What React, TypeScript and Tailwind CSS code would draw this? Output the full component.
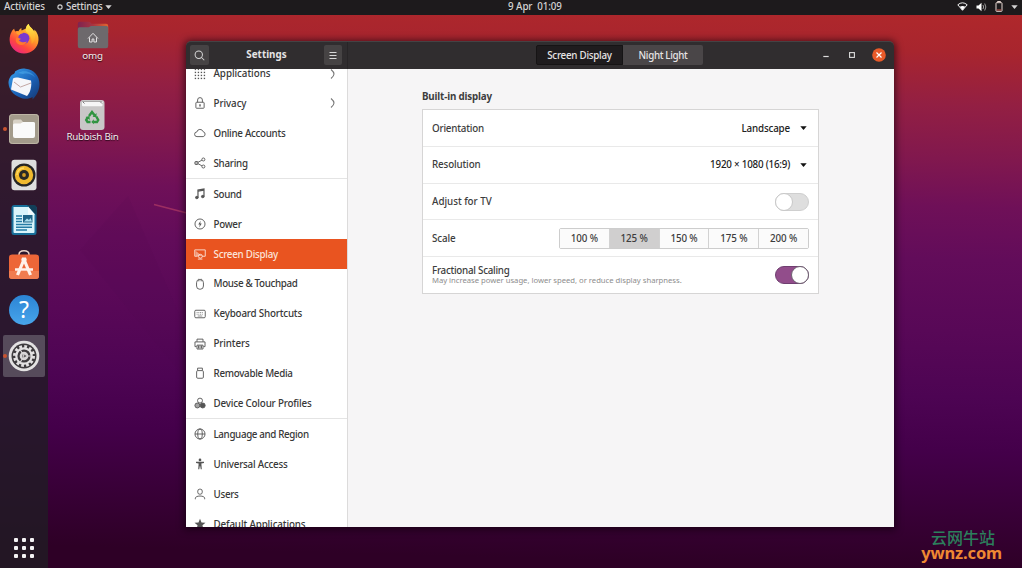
import type { ReactNode } from "react";

type Row = { label: string; track: string; icon: ReactNode; arrow?: boolean; active?: boolean; divider?: boolean };

function Glyph({ children, className = "" }: { children: ReactNode; className?: string }) {
  return (
    <svg viewBox="0 0 16 16" className={`h-[12px] w-[12px] shrink-0 ${className}`} fill="none" stroke="currentColor" strokeWidth="1.2">
      {children}
    </svg>
  );
}

function AppsGlyph() {
  return (
    <Glyph>
      <g fill="currentColor" stroke="none">
        {[2, 6, 10, 14].map((y) => [2, 6, 10, 14].map((x) => <rect key={`${x}-${y}`} x={x - 1} y={y - 1} width="1.8" height="1.8" />))}
      </g>
    </Glyph>
  );
}

const rows: Row[] = [
  { label: "Applications", track: "tracking-[-0.05px]", arrow: true, icon: <AppsGlyph /> },
  {
    label: "Privacy", track: "tracking-[-0.08px]", arrow: true,
    icon: <Glyph><rect x="2.5" y="7" width="11" height="8" rx="1" /><path d="M4.8 7V4a3.2 3.2 0 0 1 6.4 0v3" /><path d="M8 9.5v3" strokeWidth="1.8" /></Glyph>,
  },
  {
    label: "Online Accounts", track: "tracking-[-0.29px]",
    icon: <Glyph><path d="M4 12.8a3.1 3.1 0 0 1-.2-6.2 4.3 4.3 0 0 1 8.3-.4 3.4 3.4 0 0 1 .2 6.6z" /></Glyph>,
  },
  {
    label: "Sharing", track: "tracking-[-0.28px]",
    icon: <Glyph><rect x="1.2" y="6" width="4" height="4" rx="1" fill="currentColor" fillOpacity=".4" /><circle cx="12.5" cy="3.3" r="2" /><circle cx="12.5" cy="12.7" r="2" /><path d="M5.2 7.2l5.4-3M5.2 8.8l5.4 3" /></Glyph>,
  },
  {
    label: "Sound", track: "tracking-[-0.33px]", divider: true,
    icon: <Glyph><path d="M5.3 12.5V2.8l8-1.4v9.8" strokeWidth="1.6" /><path d="M5.3 4.2l8-1.4" strokeWidth="1.8" /><g fill="currentColor"><ellipse cx="3.8" cy="12.7" rx="1.8" ry="1.6" /><ellipse cx="11.7" cy="11.4" rx="1.8" ry="1.6" /></g></Glyph>,
  },
  {
    label: "Power", track: "tracking-[-0.29px]",
    icon: <Glyph><circle cx="8" cy="8" r="6.7" /><path d="M8.8 3.5L5.7 8.6h2L7 12.6l3.3-5.2H8.3z" fill="currentColor" stroke="none" /></Glyph>,
  },
  {
    label: "Screen Display", track: "tracking-[-0.26px]", active: true,
    icon: <Glyph><path d="M1 2.5h14v8.5H11M5 11H1V2.5" /><path d="M2 3.5l9 7H2z" fill="currentColor" fillOpacity=".55" stroke="none" /><circle cx="8.5" cy="11" r="2.6" /><path d="M5.2 14.8h6" /></Glyph>,
  },
  {
    label: "Mouse & Touchpad", track: "tracking-[-0.34px]",
    icon: <Glyph><rect x="3.4" y="2" width="9.2" height="13" rx="4.3" /><path d="M6.5 1v3.5M9.5 1v3.5" strokeWidth="1" /></Glyph>,
  },
  {
    label: "Keyboard Shortcuts", track: "tracking-[-0.19px]",
    icon: <Glyph><rect x="1" y="3" width="14" height="10" rx="1.5" /><path d="M3.5 6h9M3.5 8.3h9" strokeDasharray="1.3 1" strokeOpacity=".7" /><path d="M5 10.7h6" strokeOpacity=".7" /></Glyph>,
  },
  {
    label: "Printers", track: "tracking-[-0.15px]",
    icon: <Glyph><path d="M4 5V1.5h8V5M3.5 11.5H1.3V5.2h13.4v6.3h-2.2" /><path d="M4 9.5h8v5.2H4zM6 10v4M8 10v4M10 10v4" /></Glyph>,
  },
  {
    label: "Removable Media", track: "tracking-[-0.29px]",
    icon: <Glyph><rect x="3.5" y="4.8" width="9" height="10.2" rx="1.5" /><path d="M4.8 4.5V1.5h6.4v3" /></Glyph>,
  },
  {
    label: "Device Colour Profiles", track: "tracking-[-0.19px]",
    icon: <Glyph><circle cx="8" cy="4.8" r="3.3" /><circle cx="4.5" cy="11.3" r="3.3" fill="currentColor" fillOpacity=".55" /><circle cx="11.6" cy="11.3" r="3.3" fill="currentColor" /></Glyph>,
  },
  {
    label: "Language and Region", track: "tracking-[-0.36px]", divider: true,
    icon: <Glyph><circle cx="8" cy="8" r="6.7" /><ellipse cx="8" cy="8" rx="3" ry="6.7" /><path d="M1.3 8h13.4" /></Glyph>,
  },
  {
    label: "Universal Access", track: "tracking-[-0.23px]",
    icon: <Glyph><g fill="currentColor" stroke="none"><circle cx="8" cy="2.5" r="1.8" /><path d="M2.7 5h10.6v1.5l-3.5.7.6 7.8H9L8.2 10.5h-.4L7 15H5.6l.6-7.8-3.5-.7z" /></g></Glyph>,
  },
  {
    label: "Users", track: "tracking-[-0.3px]",
    icon: <Glyph><rect x="5" y="1.5" width="6" height="6.8" rx="2.7" /><path d="M1.8 15v-1.5c0-1.5 2.5-2.8 6.2-2.8s6.2 1.3 6.2 2.8V15" /></Glyph>,
  },
  {
    label: "Default Applications", track: "tracking-[-0.13px]",
    icon: <Glyph><path d="M8 1l2 4.9 5.3.4-4 3.4 1.2 5.2L8 12.1l-4.5 2.8 1.2-5.2-4-3.4L6 5.9z" fill="currentColor" stroke="none" /></Glyph>,
  },
];

function Firefox() {
  return (
    <svg viewBox="0 0 32 32" className="h-[32px] w-[32px]">
      <defs>
        <linearGradient id="ff" x1=".85" y1="0" x2=".2" y2="1">
          <stop offset="0" stopColor="#ffe44a" /><stop offset=".4" stopColor="#ff9a2a" /><stop offset=".7" stopColor="#ff4a3c" /><stop offset="1" stopColor="#e8208a" />
        </linearGradient>
        <linearGradient id="ffy" x1="0" y1="0" x2="0" y2="1">
          <stop offset="0" stopColor="#fff04f" /><stop offset="1" stopColor="#ff9a22" />
        </linearGradient>
      </defs>
      <path d="M3.500 9c.8-1.800 1.700-2.600 2.700-3.300.1 1.200.5 2 1.300 2.700 1-.3 2-.4 3-.2C11.200 6.500 12.300 5.500 13.500 5c-.3 1-.2 1.800.2 2.400L18 5.500c.2-2 1-3.700 2.800-4.500.2 2.500 2.500 3.500 4.300 6 .5.600.8 1 1 1.500.3-.7.3-1.300.2-2C29.500 9.500 30.700 13 30.500 17 30 25 23.700 30.500 16 30.500S1.700 24.500 1.600 17c0-3 .6-5.700 1.900-8z" fill="url(#ff)" />
      <path d="M20.800 1c.2 2.500 2.500 3.500 4.300 6 3.400 5 2.400 11-1.600 14 .5-4.500-.5-8.500-5.500-12.500-.8-2.800.6-6.200 2.800-7.500z" fill="url(#ffy)" />
      <circle cx="15.800" cy="15.300" r="5.600" fill="#7a3ad0" />
      <path d="M8.500 14.500c2 0 3 1 4.500 1.300l-2 1.700c1.500 2 5.500 2.300 8 1-2 4.500-9.500 4.500-11 0-.5-1.500 0-3 .5-4z" fill="#ff7a2d" />
      <path d="M8 9.500c3-1.500 5.500-1.300 7 .7-1.800 0-2.800.8-3.500 1.800C10 12 8.700 11 8 9.500z" fill="#ffa030" />
    </svg>
  );
}

function Thunderbird() {
  return (
    <svg viewBox="0 0 32 32" className="h-[32px] w-[32px]">
      <defs>
        <linearGradient id="tb" x1="0" y1="0" x2="1" y2="1"><stop offset="0" stopColor="#3aa3ee" /><stop offset=".55" stopColor="#1b62b8" /><stop offset="1" stopColor="#15356f" /></linearGradient>
      </defs>
      <path d="M7 3.500C10.500 1 14 .2 17.500.7 26 1.500 31.700 8 31.500 16.500 31.300 24 27 29 24.500 31.500c.3-1.500 0-2.500 0-2.500-3 2.200-9 2.500-12.500.5C5 26.500 1 22 .5 15c-.1-2.500.8-4.500 2-6.500C4 6 7 6.500 7 3.500z" fill="url(#tb)" />
      <path d="M10 5c6-3.500 14-1.500 17 4.500-4-4-8-4.500-12-3.500z" fill="#5dbcf5" opacity=".4" />
      <path d="M5 10.500Q7 9 10 9.500l13 3c1 5-.5 12-4 15.500L3 21.500z" fill="#f5f6fa" />
      <path d="M6 14l6.500 5L23 15" fill="none" stroke="#c3a7a4" strokeWidth="1" />
    </svg>
  );
}

function Files() {
  return (
    <svg viewBox="0 0 32 32" className="h-[32px] w-[32px]">
      <rect x="1" y="1" width="30" height="30" rx="3.500" fill="#a39b8b" /><rect x="1.500" y="1.500" width="29" height="29" rx="3" fill="none" stroke="#bdb5a5" />
      <path d="M5 8.500Q5 6.500 7 6.500h6l2 2.500h10q2 0 2 2v3H5z" fill="#d8d2c6" />
      <path d="M5 12q0-1.500 1.500-1.500h6L15 9h10.500Q27 9 27 10.500V23q0 2-2 2H7q-2 0-2-2z" fill="#fafafa" />
    </svg>
  );
}

function Rhythmbox() {
  return (
    <svg viewBox="0 0 32 32" className="h-[32px] w-[32px]">
      <rect x="3.500" y=".8" width="25" height="30.400" rx="3" fill="#dedede" />
      <circle cx="16" cy="16" r="11.500" fill="#252525" /><circle cx="16" cy="16" r="9.200" fill="#f0b92e" />
      <circle cx="16" cy="16" r="5" fill="#2a2926" /><circle cx="16" cy="16" r="1.900" fill="#d39b25" />
      <path d="M9 16a7 7 0 0 1 7-7" stroke="#ffda62" strokeWidth="1.500" fill="none" />
    </svg>
  );
}

function Writer() {
  return (
    <svg viewBox="0 0 32 32" className="h-[32px] w-[32px]">
      <path d="M6.500 1H21l7.500 2v25.500q0 2.500-2.500 2.500H6q-2.500 0-2.500-2.500V4q0-3 3-3z" fill="#176f9a" />
      <path d="M6 3h14l6.500 7.500V28q0 1-1 1H6.500q-1 0-1-1V3.500z" fill="#d9f4fb" />
      <path d="M19 1h7q2.500 0 2.500 2.500v8z" fill="#123f58" /><path d="M20 2.500l7 8h-7z" fill="#f4fbfd" />
      <g stroke="#257ca5" strokeWidth="1.500"><path d="M8 12h6M8 14.800h6M8 17.600h6M8 20.400h16M8 23.200h16M8 26h11" /></g>
      <rect x="15" y="11" width="9.500" height="7.500" fill="#1e6487" /><path d="M16 17.500l3-3 2 1.500 1.500-2 1.500 3.500z" fill="#a9deee" />
    </svg>
  );
}

function Software() {
  return (
    <svg viewBox="0 0 32 32" className="h-[32px] w-[32px]">
      <path d="M11 8V5.500C11 .5 21 .5 21 5.500V8" fill="none" stroke="#e9d2c7" strokeWidth="1.500" />
      <rect x="1" y="5.500" width="30" height="24.500" rx="3" fill="#ed6638" /><path d="M1 22h30v5q0 3-3 3H4q-3 0-3-3z" fill="#f07c50" />
      <path d="M9.500 26L16 10.500 22.500 26" fill="none" stroke="#fff2ea" strokeWidth="3.200" strokeLinejoin="bevel" />
      <path d="M7 20.500h18" stroke="#fff2ea" strokeWidth="2.500" /><path d="M14 8.500h4l1 3h-6z" fill="#fff2ea" />
    </svg>
  );
}

function Help() {
  return (
    <div className="mx-px flex h-[30px] w-[30px] items-center justify-center rounded-full bg-linear-to-b from-[#2b84d4] to-[#48a5eb] pb-px font-['Noto_Sans',sans-serif] text-[23px] leading-none text-white">?</div>
  );
}

function Gear() {
  return (
    <svg viewBox="0 0 32 32" className="h-[32px] w-[32px]">
      <circle cx="16" cy="16" r="15.300" fill="#e4e2e3" /><circle cx="16" cy="16" r="12.500" fill="#3e3b3e" />
      <circle cx="16" cy="16" r="9.500" fill="none" stroke="#e4e2e3" strokeWidth="3" strokeDasharray="2.700 2.274" />
      <circle cx="16" cy="16" r="7.700" fill="none" stroke="#e4e2e3" strokeWidth="2.200" />
      <circle cx="16" cy="16" r="4.300" fill="#d8d6d7" />
      <path d="M14.500 13.800l4 2.200-4 2.200z" fill="#3e3b3e" /><path d="M16 16L11.500 8.500M16 16l-4.500 7.500M19 16h5" stroke="#d8d6d7" strokeWidth="1.200" />
    </svg>
  );
}

const dock = [
  { name: "firefox", icon: <Firefox /> },
  { name: "thunderbird", icon: <Thunderbird /> },
  { name: "files", icon: <Files />, running: true },
  { name: "rhythmbox", icon: <Rhythmbox /> },
  { name: "writer", icon: <Writer /> },
  { name: "software", icon: <Software /> },
  { name: "help", icon: <Help /> },
  { name: "settings", icon: <Gear />, running: true, selected: true },
];

function Caret({ className = "" }: { className?: string }) {
  return <svg viewBox="0 0 8 5" className={`h-[4px] w-[7px] shrink-0 ${className}`}><path d="M0 .3h8L4 5z" fill="currentColor" /></svg>;
}

function TopBar() {
  return (
    <header className="grid h-[15px] shrink-0 grid-cols-3 items-center bg-[#1d1a1c] pb-[2px] text-[9.8px] leading-[13px] font-medium text-[#d4d3d3]">
      <div className="flex items-center pl-[4px]">
        <span className="tracking-[-0.13px]">Activities</span>
        <svg viewBox="0 0 8 8" className="ml-[12px] h-[6px] w-[6px]"><circle cx="4" cy="4" r="2.800" fill="none" stroke="#cfcfcf" strokeWidth="1.500" /></svg>
        <span className="ml-[3px] tracking-[-0.18px]">Settings</span>
        <Caret className="ml-[2px]" />
      </div>
      <div className="flex translate-x-[24px] justify-center whitespace-pre tracking-[-0.1px]">9 Apr  01:09</div>
      <div className="flex items-center justify-end pr-[4px]">
        <svg viewBox="0 0 11 9" className="mr-[8px] h-[9px] w-[11px]"><path d="M.8 2.800Q5.500-1.200 10.200 2.800L5.500 8.300z" fill="none" stroke="#f0f0f0" /><path d="M2.800 4.800Q5.500 3 8.200 4.800L5.500 8.300z" fill="#fff" /></svg>
        <svg viewBox="0 0 11 10" className="mr-[8px] h-[10px] w-[11px]"><path d="M.5 3.500h2L5.500.8v8.400l-3-2.700h-2z" fill="#fff" /><path d="M7 3q1.300 2 0 4M8.700 1.500q2.300 3.500 0 7" fill="none" stroke="#aaa" strokeWidth=".9" /></svg>
        <svg viewBox="0 0 8 11" className="mr-[8px] h-[11px] w-[8px]"><path d="M2.500 1.500V.5h3v1" stroke="#e8d8d2" fill="none" /><rect x="1" y="1.700" width="6" height="8.600" rx=".5" fill="none" stroke="#e8d8d2" /><path d="M1.700 9h4.600" stroke="#b5524a" strokeWidth="1.200" /></svg>
        <Caret />
      </div>
    </header>
  );
}

function Dock() {
  return (
    <nav className="flex w-[48px] shrink-0 flex-col items-center bg-[#201c24]/80 pt-[1px]">
      {dock.map((d) => (
        <div key={d.name} className="flex h-[45.3px] w-full items-center pl-[3px]">
          <div className={`flex h-[42px] w-[42px] items-center justify-center rounded-[2px] ${d.selected ? "bg-[#564b5b]" : ""}`}>
            <span className={`-ml-px h-[4px] w-[4px] shrink-0 -translate-x-px rounded-full ${d.running ? "bg-[#c9532f]" : ""}`} />
            <span className="mr-[3px]">{d.icon}</span>
          </div>
        </div>
      ))}
      <div className="mt-auto mb-[10px] grid grid-cols-3 gap-[4px]">
        {Array.from({ length: 9 }, (_, i) => <span key={i} className="h-[4px] w-[4px] rounded-[1px] bg-[#f4f2f4]" />)}
      </div>
    </nav>
  );
}

function DesktopIcons() {
  return (
    <div className="flex w-[89px] shrink-0 flex-col items-center pt-[6px] text-center text-[9.8px] leading-[13px] text-[#f3ebee] [text-shadow:0_1px_1px_rgba(0,0,0,0.7)]">
      <svg viewBox="0 0 32 28" className="h-[28px] w-[32px]">
        <defs><linearGradient id="fold" x1="0" x2="1"><stop offset="0" stopColor="#7e2350" /><stop offset=".5" stopColor="#a93440" /><stop offset="1" stopColor="#e2662f" /></linearGradient></defs>
        <path d="M.8 3q0-2.200 2-2.200h9q1.300 0 2 1l.7.900h14.500q2.200 0 2.200 2V12H.8z" fill="url(#fold)" />
        <path d="M.8 8q0-1.800 1.800-1.800h9L14 5h15.400q1.800 0 1.800 1.800V25q0 2.200-2.200 2.200H3Q.8 27.200.8 25z" fill="#6d696c" />
        <path d="M11 17.500L16 12.300l5 5.200M12.500 16.500V21h2.600v-3h1.800v3h2.600v-4.500" fill="none" stroke="#e4e2e3" />
      </svg>
      <span className="tracking-[-0.2px]">omg</span>
      <svg viewBox="0 0 32 32" className="mt-[37px] -ml-px h-[32px] w-[32px]">
        <rect x="4" y="1" width="24.500" height="30" rx="3" fill="#c9c7c7" /><rect x="6" y="2.300" width="20.500" height="5" rx="1" fill="#f6f6f6" /><path d="M6.500 2.500l2 2M24 2.500l2 2" stroke="#777" /><path d="M7 2.500h19" stroke="#9a9898" strokeWidth=".8" />
        <g fill="none" stroke="#2f9440" strokeWidth="2.400"><path d="M13 17l3-4 2.700 3.500M20.300 17.500l1.900 3.500-1.200 2h-3.700M14.500 23h-3l-1.300-2 1.500-2.700" /></g>
        <g fill="#2f9440"><path d="M20.500 14v4h-4zM17.800 20.300v5L15.300 23zM9.500 18l4-1 .3 4z" /></g>
      </svg>
      <span className="mt-[-1px] tracking-[-0.25px]">Rubbish Bin</span>
    </div>
  );
}

function TitleBar() {
  return (
    <div className="flex h-[28px] shrink-0 items-center rounded-t-[5px] border-t border-[#454244] bg-[#302d2f] text-[9.8px] text-[#e6e4e5]">
      <div className="flex h-full w-[162px] items-center justify-between border-r border-[#282527] pr-[5px] pb-px pl-[4px]">
        <div className="flex h-[20px] w-[19px] items-center justify-center rounded-[2px] bg-[#464344]">
          <svg viewBox="0 0 12 12" className="h-[11px] w-[11px]" fill="none" stroke="#d8d8d8" strokeWidth="1.100"><circle cx="5.200" cy="5.200" r="4" /><path d="M8.200 8.200l3 3" /></svg>
        </div>
        <span className="pt-px font-bold tracking-[0.02px]">Settings</span>
        <div className="flex h-[20px] w-[18px] items-center justify-center rounded-[2px] bg-[#464344]">
          <svg viewBox="0 0 10 10" className="h-[10px] w-[10px]" stroke="#d8d8d8"><path d="M1.500 2.500h7M1.500 5.500h7M1.500 8.500h7" /></svg>
        </div>
      </div>
      <div className="flex flex-1 items-center pr-[8px] pb-px pl-[188px]">
        <div className="flex h-[20px] font-medium">
          <span className="flex w-[87px] items-center justify-center rounded-l-[2px] border border-[#161415] bg-[#1f1c1e] pt-[2px] tracking-[-0.26px]">Screen Display</span>
          <span className="flex w-[80px] items-center justify-center rounded-r-[2px] bg-[#4a4648] pt-[2px] tracking-[-0.35px]">Night Light</span>
        </div>
        <div className="ml-auto flex items-center">
          <svg viewBox="0 0 6 6" className="mr-[20px] h-[6px] w-[6px]"><path d="M.3 4.500h5.400" stroke="#dcdcdc" strokeWidth="1.200" /></svg>
          <svg viewBox="0 0 6 6" className="mr-[17px] h-[6px] w-[6px]"><rect x=".6" y=".6" width="4.800" height="4.800" fill="none" stroke="#dcdcdc" strokeWidth="1.100" /></svg>
          <svg viewBox="0 0 14 14" className="h-[14px] w-[14px]"><circle cx="7" cy="7" r="6.800" fill="#e85a29" /><path d="M4.500 4.500l5 5M9.500 4.500l-5 5" stroke="#fff" strokeWidth="1.200" /></svg>
        </div>
      </div>
    </div>
  );
}

function Sidebar() {
  return (
    <aside className="w-[162px] shrink-0 overflow-hidden border-r border-[#dcdbdb] bg-white">
      <ul className="-mt-[10.4px]">
        {rows.map((r) => (
          <li key={r.label} className={r.divider ? "border-t border-[#e4e4e4]" : ""}>
            <div className={`flex h-[29.9px] items-center pr-[11px] pl-[8px] ${r.active ? "bg-[#e95420] text-[#fbe3d9]" : "text-[#383838]"}`}>
              <span className={`flex ${r.active ? "" : "opacity-85"}`}>{r.icon}</span>
              <span className={`ml-[7.5px] flex-1 pt-[2px] text-[9.8px] font-medium whitespace-nowrap ${r.track}`}>{r.label}</span>
              {r.arrow && <svg viewBox="0 0 6 10" className="h-[10px] w-[6px]"><path d="M1 .5q3 2.500 3 4.500t-3 4.500" fill="none" stroke="#777" strokeWidth="1.100" /></svg>}
            </div>
          </li>
        ))}
      </ul>
    </aside>
  );
}

const scales = ["100 %", "125 %", "150 %", "175 %", "200 %"];

function DisplayPanel() {
  return (
    <main className="flex-1 bg-[#f6f5f6] pt-[21px] pl-[74px] text-[9.8px] font-medium text-[#3d3d3d]">
      <h2 className="h-[14px] leading-[14px] font-bold tracking-[-0.16px]">Built-in display</h2>
      <section className="mt-[5px] w-[397px] divide-y divide-[#e9e9e9] border border-[#d6d5d5] bg-white">
        <div className="flex h-[37px] items-center px-[9px]">
          <span className="flex-1 pt-[3px] tracking-[-0.2px]">Orientation</span>
          <span className="pt-[3px] tracking-[-0.16px] text-[#222]">Landscape</span><Caret className="mr-[2px] ml-[10px] text-[#111]" />
        </div>
        <div className="flex h-[36.5px] items-center px-[9px]">
          <span className="flex-1 pt-[2px] tracking-[-0.14px]">Resolution</span>
          <span className="pt-[2px] tracking-[-0.21px] text-[#222]">1920 × 1080 (16:9)</span><Caret className="mr-[2px] ml-[10px] text-[#111]" />
        </div>
        <div className="flex h-[36.5px] items-center px-[9px]">
          <span className="flex-1 pt-[3px] tracking-[-0.03px]">Adjust for TV</span>
          <span className="mt-px flex h-[18px] w-[34px] rounded-full border border-[#cfcfcf] bg-[#dedede]"><span className="-mt-px -ml-px h-[18px] w-[18px] rounded-full border border-[#c8c8c8] bg-white" /></span>
        </div>
        <div className="flex h-[36.5px] items-center px-[9px]">
          <span className="flex-1 pt-[3px] tracking-[-0.12px]">Scale</span>
          <div className="mt-px flex h-[21px] w-[250px] divide-x divide-[#d2d2d2] rounded-[2px] border border-[#cdcdcd]">
            {scales.map((s) => <span key={s} className={`flex flex-1 items-center justify-center pt-[2px] tracking-[-0.1px] ${s === "125 %" ? "bg-[#d0cfcf]" : "bg-[#fbfbfb]"}`}>{s}</span>)}
          </div>
        </div>
        <div className="flex h-[36.5px] items-center px-[9px]">
          <div className="flex flex-1 flex-col">
            <span className="leading-[11px] tracking-[-0.26px]">Fractional Scaling</span>
            <span className="text-[7.7px] leading-[9px] font-normal tracking-[-0.02px] whitespace-nowrap text-[#8d8d8d]">May increase power usage, lower speed, or reduce display sharpness.</span>
          </div>
          <span className="flex h-[18px] w-[34px] justify-end rounded-full border border-[#6f3f70] bg-[#924d8b]"><span className="-mt-px -mr-px h-[18px] w-[18px] rounded-full border border-[#6d6170] bg-white" /></span>
        </div>
      </section>
    </main>
  );
}

export default function App() {
  return (
    <div className="relative flex h-[568px] w-[1022px] flex-col overflow-hidden bg-[linear-gradient(181.5deg,#b0282b_2%,#a8252e_9%,#931f43_18%,#81184e_27%,#6f1058_35%,#620c5a_44%,#580857_56%,#4d0453_67%,#44004a_76%,#390038_86%,#2e0026_96%)] font-['Noto_Sans',sans-serif]">
      <svg viewBox="0 0 1022 568" className="pointer-events-none absolute inset-0 h-full w-full">
        <path d="M128 196L80 250 186 380V330z" fill="#4a0650" opacity=".1" />
        <path d="M154 204.500L210 219" stroke="#b84066" strokeWidth="1.800" opacity=".65" />
      </svg>
      <div className="relative flex min-h-0 flex-1 flex-col">
        <TopBar />
        <div className="flex min-h-0 flex-1">
          <Dock />
          <DesktopIcons />
          <div className="mt-[26px] ml-[49px] flex h-[486px] w-[707.5px] shrink-0 flex-col rounded-t-[5px] shadow-[0_1px_7px_2px_rgba(15,0,10,0.6)]">
            <TitleBar />
            <div className="flex min-h-0 flex-1"><Sidebar /><DisplayPanel /></div>
          </div>
          <div className="ml-auto flex shrink-0 flex-col justify-end pb-[7px]">
            <div className="w-[128px] pr-[20px] text-right">
              <div className="pr-[7px] font-['Noto_Sans_CJK_SC',sans-serif] text-[16px] leading-[15px] font-medium text-[#2c7f5c]">云网牛站</div>
              <div className="text-[16.5px] leading-[16px] font-bold tracking-[-0.15px] text-[#ef8833]">ywnz.com</div>
            </div>
          </div>
        </div>
      </div>
    </div>
  );
}
